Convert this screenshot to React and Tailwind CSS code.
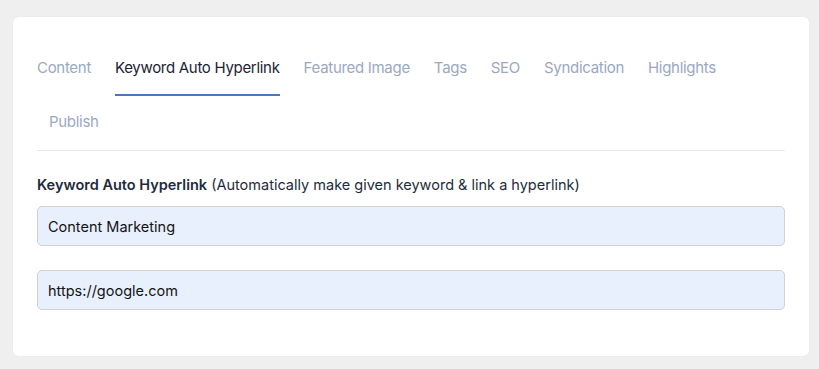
import React, { useState } from 'react';

const tabs = [
    'Content',
    'Keyword Auto Hyperlink',
    'Featured Image',
    'Tags',
    'SEO',
    'Syndication',
    'Highlights',
    'Publish',
];

function App() {
    const [active, setActive] = useState('Keyword Auto Hyperlink');
    const [keyword, setKeyword] = useState('Content Marketing');
    const [link, setLink] = useState('https://google.com');

    return (
        <div className="min-h-screen bg-[#efefef] pt-[17px] pl-[13px] font-['Inter',sans-serif]">
            <div className="w-[796px] rounded-md bg-white px-6 pt-[25px] pb-[46px] shadow-[0_0_2px_rgba(0,0,0,0.04)]">
                <div className="mb-6 flex flex-wrap border-b border-[#e6e8ec]">
                    {tabs.map((tab, i) => (
                        <button
                            key={tab}
                            onClick={() => setActive(tab)}
                            className={`mx-3 border-b-2 pt-4 pb-4 text-[15px] leading-5 tracking-[-0.3px] ${
                                i === 0 ? 'ml-0' : ''
                            } ${
                                active === tab
                                    ? 'border-[#4a78b8] text-[#1b2333]'
                                    : 'border-transparent text-[#9aa8c2]'
                            }`}
                        >
                            {tab}
                        </button>
                    ))}
                </div>
                <label className="mb-[11px] block text-[14.5px] leading-5 text-[#1e2b3c]">
                    <span className="font-semibold">Keyword Auto Hyperlink</span> (Automatically make given keyword &amp; link a hyperlink)
                </label>
                <div className="space-y-6">
                    <input
                        type="text"
                        value={keyword}
                        onChange={(e) => setKeyword(e.target.value)}
                        className="block h-10 w-full rounded-[5px] border border-[#cfd1d6] bg-[#e8f0fe] px-[10px] text-[14.5px] text-[#141414] focus:outline-none"
                    />
                    <input
                        type="text"
                        value={link}
                        onChange={(e) => setLink(e.target.value)}
                        className="block h-10 w-full rounded-[5px] border border-[#cfd1d6] bg-[#e8f0fe] px-[10px] text-[14.5px] text-[#141414] focus:outline-none"
                    />
                </div>
            </div>
        </div>
    );
}

export default App;
